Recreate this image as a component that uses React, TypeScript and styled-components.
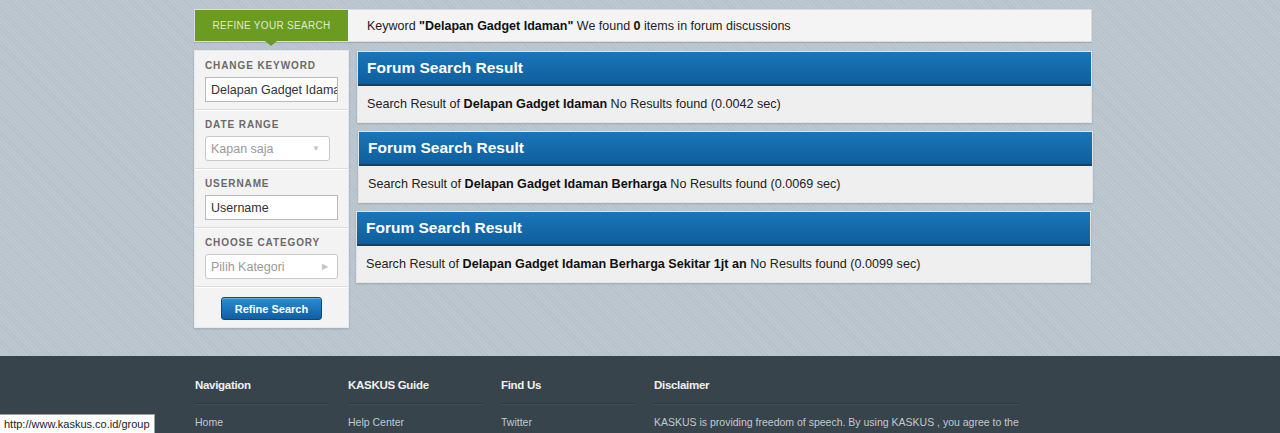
import styled, { createGlobalStyle } from "styled-components";

const GlobalStyle = createGlobalStyle`
  html, body {
    margin: 0;
    padding: 0;
  }
  body {
    font-family: "Liberation Sans", Arial, sans-serif;
    font-size: 12px;
    color: #222;
    background: #37444c;
  }
`;

const Main = styled.div`
  background-color: #b9c4cc;
  background-image: repeating-linear-gradient(
    45deg,
    #b6c1c9 0px,
    #b6c1c9 1px,
    #bcc7cf 1px,
    #bcc7cf 3px
  );
  height: 356px;
  padding-top: 9px;
  box-sizing: border-box;
`;

const Wrap = styled.div`
  width: 904px;
  margin: 0 auto;
  padding-left: 6px;
  box-sizing: border-box;
`;

const TopBar = styled.div`
  display: flex;
  align-items: center;
  height: 33px;
  background: #f4f4f4;
  border: 1px solid #d7dde1;
  box-sizing: border-box;
  box-shadow: 0 1px 1px rgba(0, 0, 0, 0.12);
`;

const Tab = styled.div`
  position: relative;
  width: 153px;
  height: 31px;
  background: #6c9b22;
  color: #dfeacb;
  font-size: 10px;
  letter-spacing: 0.3px;
  display: flex;
  align-items: center;
  justify-content: center;
  text-transform: uppercase;
  &::after {
    content: "";
    position: absolute;
    left: 70px;
    bottom: -5px;
    border-left: 6px solid transparent;
    border-right: 6px solid transparent;
    border-top: 5px solid #6c9b22;
  }
`;

const Keyword = styled.div`
  margin-left: 19px;
  font-size: 12.5px;
  color: #222;
  b {
    color: #111;
  }
`;

const Body = styled.div`
  display: flex;
  align-items: flex-start;
  gap: 7px;
  margin-top: 8px;
`;

const Sidebar = styled.div`
  width: 155px;
  flex-shrink: 0;
  background: #f3f3f3;
  border: 1px solid #e6e9eb;
  box-sizing: border-box;
  box-shadow: 0 1px 2px rgba(0, 0, 0, 0.15);
`;

const Section = styled.div`
  padding: 8px 10px 7px;
  border-bottom: 1px solid #dcdcdc;
  box-shadow: 0 1px 0 #ffffff;
`;

const Label = styled.div`
  font-size: 10px;
  font-weight: bold;
  letter-spacing: 0.9px;
  color: #6a6a6a;
  line-height: 14px;
  margin-bottom: 4px;
  text-transform: uppercase;
`;

const TextBox = styled.div`
  height: 25px;
  box-sizing: border-box;
  border: 1px solid #b9b9b9;
  background: #fff;
  padding: 0 5px;
  display: flex;
  align-items: center;
  font-size: 12.5px;
  color: #333;
  white-space: nowrap;
  overflow: hidden;
`;

const Picker = styled.div<{ $w: number }>`
  height: 25px;
  width: ${(p) => p.$w}px;
  box-sizing: border-box;
  border: 1px solid #c8c8c8;
  border-radius: 3px;
  background: #fff;
  padding: 0 5px;
  display: flex;
  align-items: center;
  justify-content: space-between;
  font-size: 12.5px;
  color: #9a9a9a;
`;

const Caret = styled.span`
  color: #c4c4c4;
  font-size: 8px;
  margin-right: 4px;
`;

const ButtonRow = styled.div`
  display: flex;
  justify-content: center;
  padding: 10px 0 7px;
`;

const RefineButton = styled.button`
  width: 101px;
  height: 23px;
  border: 1px solid #0b4a80;
  border-radius: 3px;
  background: linear-gradient(#2b8bd1, #0f5fa5);
  color: #fff;
  font-family: "Liberation Sans", Arial, sans-serif;
  font-weight: bold;
  font-size: 11px;
  padding: 0;
  box-shadow: inset 0 1px 0 rgba(255, 255, 255, 0.3);
`;

const Results = styled.div`
  display: flex;
  flex-direction: column;
  gap: 7px;
  width: 737px;
`;

const Panel = styled.div<{ $shift: number }>`
  width: 735px;
  margin-left: ${(p) => p.$shift}px;
  margin-top: 1px;
  border: 1px solid #e1e5e8;
  box-sizing: border-box;
  box-shadow: 0 1px 2px rgba(0, 0, 0, 0.15);
`;

const PanelHead = styled.div`
  height: 34px;
  box-sizing: border-box;
  background: linear-gradient(#1a75b9, #0f5f9c);
  border-bottom: 2px solid #0a4473;
  color: #fff;
  font-size: 15.5px;
  font-weight: bold;
  display: flex;
  align-items: center;
  padding-left: 9px;
`;

const PanelBody = styled.div`
  height: 36px;
  background: #efefef;
  display: flex;
  align-items: center;
  padding-left: 9px;
  font-size: 12.6px;
  color: #222;
  white-space: nowrap;
  b {
    color: #111;
  }
`;

const Footer = styled.div`
  background: #37444c;
  height: 77px;
  padding-top: 22px;
  box-sizing: border-box;
  overflow: hidden;
`;

const FooterCols = styled.div`
  display: flex;
  gap: 19px;
  padding-left: 1px;
`;

const FooterCol = styled.div<{ $w: number }>`
  width: ${(p) => p.$w}px;
`;

const FooterHead = styled.div`
  color: #f0f0f0;
  font-weight: bold;
  font-size: 11.5px;
  letter-spacing: -0.3px;
  line-height: 14px;
  padding-bottom: 11px;
  border-bottom: 1px solid #2d383f;
  box-shadow: 0 1px 0 #3f4d56;
`;

const FooterLink = styled.div`
  margin-top: 12px;
  color: #c3c9cd;
  font-size: 10.5px;
  white-space: nowrap;
`;

const StatusBar = styled.div`
  position: fixed;
  left: 0;
  bottom: 0;
  height: 18px;
  padding: 0 4px;
  background: #fff;
  border: 1px solid #a0a0a0;
  border-left: none;
  border-bottom: none;
  font-size: 11px;
  color: #222;
  display: flex;
  align-items: center;
`;

const results = [
  { term: "Delapan Gadget Idaman", time: "0.0042", shift: 1 },
  { term: "Delapan Gadget Idaman Berharga", time: "0.0069", shift: 2 },
  { term: "Delapan Gadget Idaman Berharga Sekitar 1jt an", time: "0.0099", shift: 0 },
];

export default function App() {
  return (
    <>
      <GlobalStyle />
      <Main>
        <Wrap>
          <TopBar>
            <Tab>Refine your search</Tab>
            <Keyword>
              Keyword <b>"Delapan Gadget Idaman"</b> We found <b>0</b> items in forum discussions
            </Keyword>
          </TopBar>
          <Body>
            <Sidebar>
              <Section>
                <Label>Change keyword</Label>
                <TextBox>Delapan Gadget Idaman</TextBox>
              </Section>
              <Section>
                <Label>Date range</Label>
                <Picker $w={125}>
                  Kapan saja
                  <Caret>▼</Caret>
                </Picker>
              </Section>
              <Section>
                <Label>Username</Label>
                <TextBox>Username</TextBox>
              </Section>
              <Section>
                <Label>Choose category</Label>
                <Picker $w={133}>
                  Pilih Kategori
                  <Caret>▶</Caret>
                </Picker>
              </Section>
              <ButtonRow>
                <RefineButton>Refine Search</RefineButton>
              </ButtonRow>
            </Sidebar>
            <Results>
              {results.map((r) => (
                <Panel key={r.term} $shift={r.shift}>
                  <PanelHead>Forum Search Result</PanelHead>
                  <PanelBody>
                    Search Result of&nbsp;<b>{r.term}</b>&nbsp;No Results found ({r.time} sec)
                  </PanelBody>
                </Panel>
              ))}
            </Results>
          </Body>
        </Wrap>
      </Main>
      <Footer>
        <Wrap>
          <FooterCols>
            <FooterCol $w={134}>
              <FooterHead>Navigation</FooterHead>
              <FooterLink>Home</FooterLink>
            </FooterCol>
            <FooterCol $w={134}>
              <FooterHead>KASKUS Guide</FooterHead>
              <FooterLink>Help Center</FooterLink>
            </FooterCol>
            <FooterCol $w={134}>
              <FooterHead>Find Us</FooterHead>
              <FooterLink>Twitter</FooterLink>
            </FooterCol>
            <FooterCol $w={364}>
              <FooterHead>Disclaimer</FooterHead>
              <FooterLink>
                KASKUS is providing freedom of speech. By using KASKUS , you agree to the
              </FooterLink>
            </FooterCol>
          </FooterCols>
        </Wrap>
      </Footer>
      <StatusBar>http://www.kaskus.co.id/group</StatusBar>
    </>
  );
}
